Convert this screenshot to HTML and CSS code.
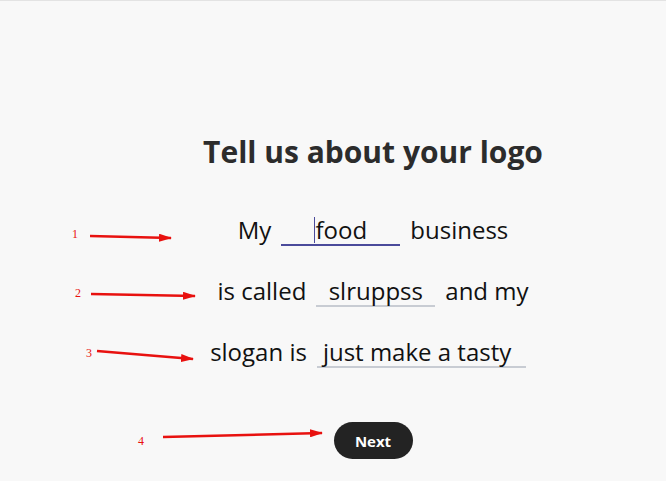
FILE: index.html
```html
<!DOCTYPE html>
<html lang="en">
<head>
    <meta charset="UTF-8">
    <meta name="viewport" content="width=device-width, initial-scale=1.0">
    <title>Tell us about your logo</title>
    <link rel="stylesheet" href="styles.css">
</head>
<body>
    <div class="page">
        <h2 class="title">Tell us about your logo</h2>
        <form class="logo-form">
            <div class="row">
                <span>My</span>
                <span class="field focused"><span class="caret"></span>food</span>
                <span>business</span>
            </div>
            <div class="row">
                <span>is called</span>
                <span class="field">slruppss</span>
                <span>and my</span>
            </div>
            <div class="row last">
                <span>slogan is</span>
                <span class="field wide">just make a tasty</span>
            </div>
            <button type="button" class="next-btn">Next</button>
        </form>

        <!-- review annotations -->
        <svg class="notes" width="666" height="481" viewBox="0 0 666 481">
            <defs>
                <marker id="head" markerWidth="13" markerHeight="8" refX="12" refY="4" orient="auto" markerUnits="userSpaceOnUse">
                    <path d="M0,0 L13,4 L0,8 Z" fill="#e8110f"/>
                </marker>
            </defs>
            <g stroke="#e8110f" stroke-width="2.5" marker-end="url(#head)">
                <line x1="90" y1="236" x2="171" y2="238"/>
                <line x1="91" y1="294" x2="195" y2="296"/>
                <line x1="97" y1="351" x2="193" y2="359"/>
                <line x1="163" y1="437" x2="322" y2="433"/>
            </g>
            <g class="note-num">
                <text x="72" y="238">1</text>
                <text x="75" y="297">2</text>
                <text x="86" y="357">3</text>
                <text x="138" y="445">4</text>
            </g>
        </svg>
    </div>
</body>
</html>
```

FILE: styles.css
```css
* {
    margin: 0;
    padding: 0;
    box-sizing: border-box;
}

body {
    background: #f8f8f8;
    font-family: "Open Sans", sans-serif;
    color: #222;
}

.page {
    position: relative;
    height: 481px;
    border-top: 1px solid #e3e3e3;
    display: flex;
    flex-direction: column;
    align-items: center;
    padding-top: 131px;
}

.title {
    font-size: 30px;
    font-weight: 700;
    line-height: 40px;
    margin-left: 80px;
    color: #2c2c2c;
}

.logo-form {
    display: flex;
    flex-direction: column;
    align-items: center;
    margin-top: 38px;
    margin-left: 80px;
}

.row {
    display: flex;
    align-items: baseline;
    gap: 10px;
    height: 61px;
    font-size: 24px;
    line-height: 40px;
    color: #111;
}

.row.last {
    margin-right: 10px;
}

.field {
    position: relative;
    display: inline-block;
    width: 119px;
    text-align: center;
    border-bottom: 2px solid #c8ccd3;
    line-height: 29px;
}

.field.focused {
    border-bottom-color: #4b4b9b;
}

.field.wide {
    width: 209px;
    text-align: left;
    padding-left: 6px;
}

.caret {
    display: inline-block;
    width: 1px;
    height: 26px;
    background: #4b4b9b;
    vertical-align: -4px;
}

.next-btn {
    margin-top: 29px;
    width: 79px;
    height: 37px;
    border: none;
    border-radius: 19px;
    background: #232323;
    color: #fff;
    font-family: "Open Sans", sans-serif;
    font-size: 15px;
    font-weight: 700;
    cursor: pointer;
}

.notes {
    position: absolute;
    left: 0;
    top: -1px;
    pointer-events: none;
}

.note-num {
    font-family: "Liberation Serif", serif;
    font-size: 12px;
    fill: #e8110f;
}
```
